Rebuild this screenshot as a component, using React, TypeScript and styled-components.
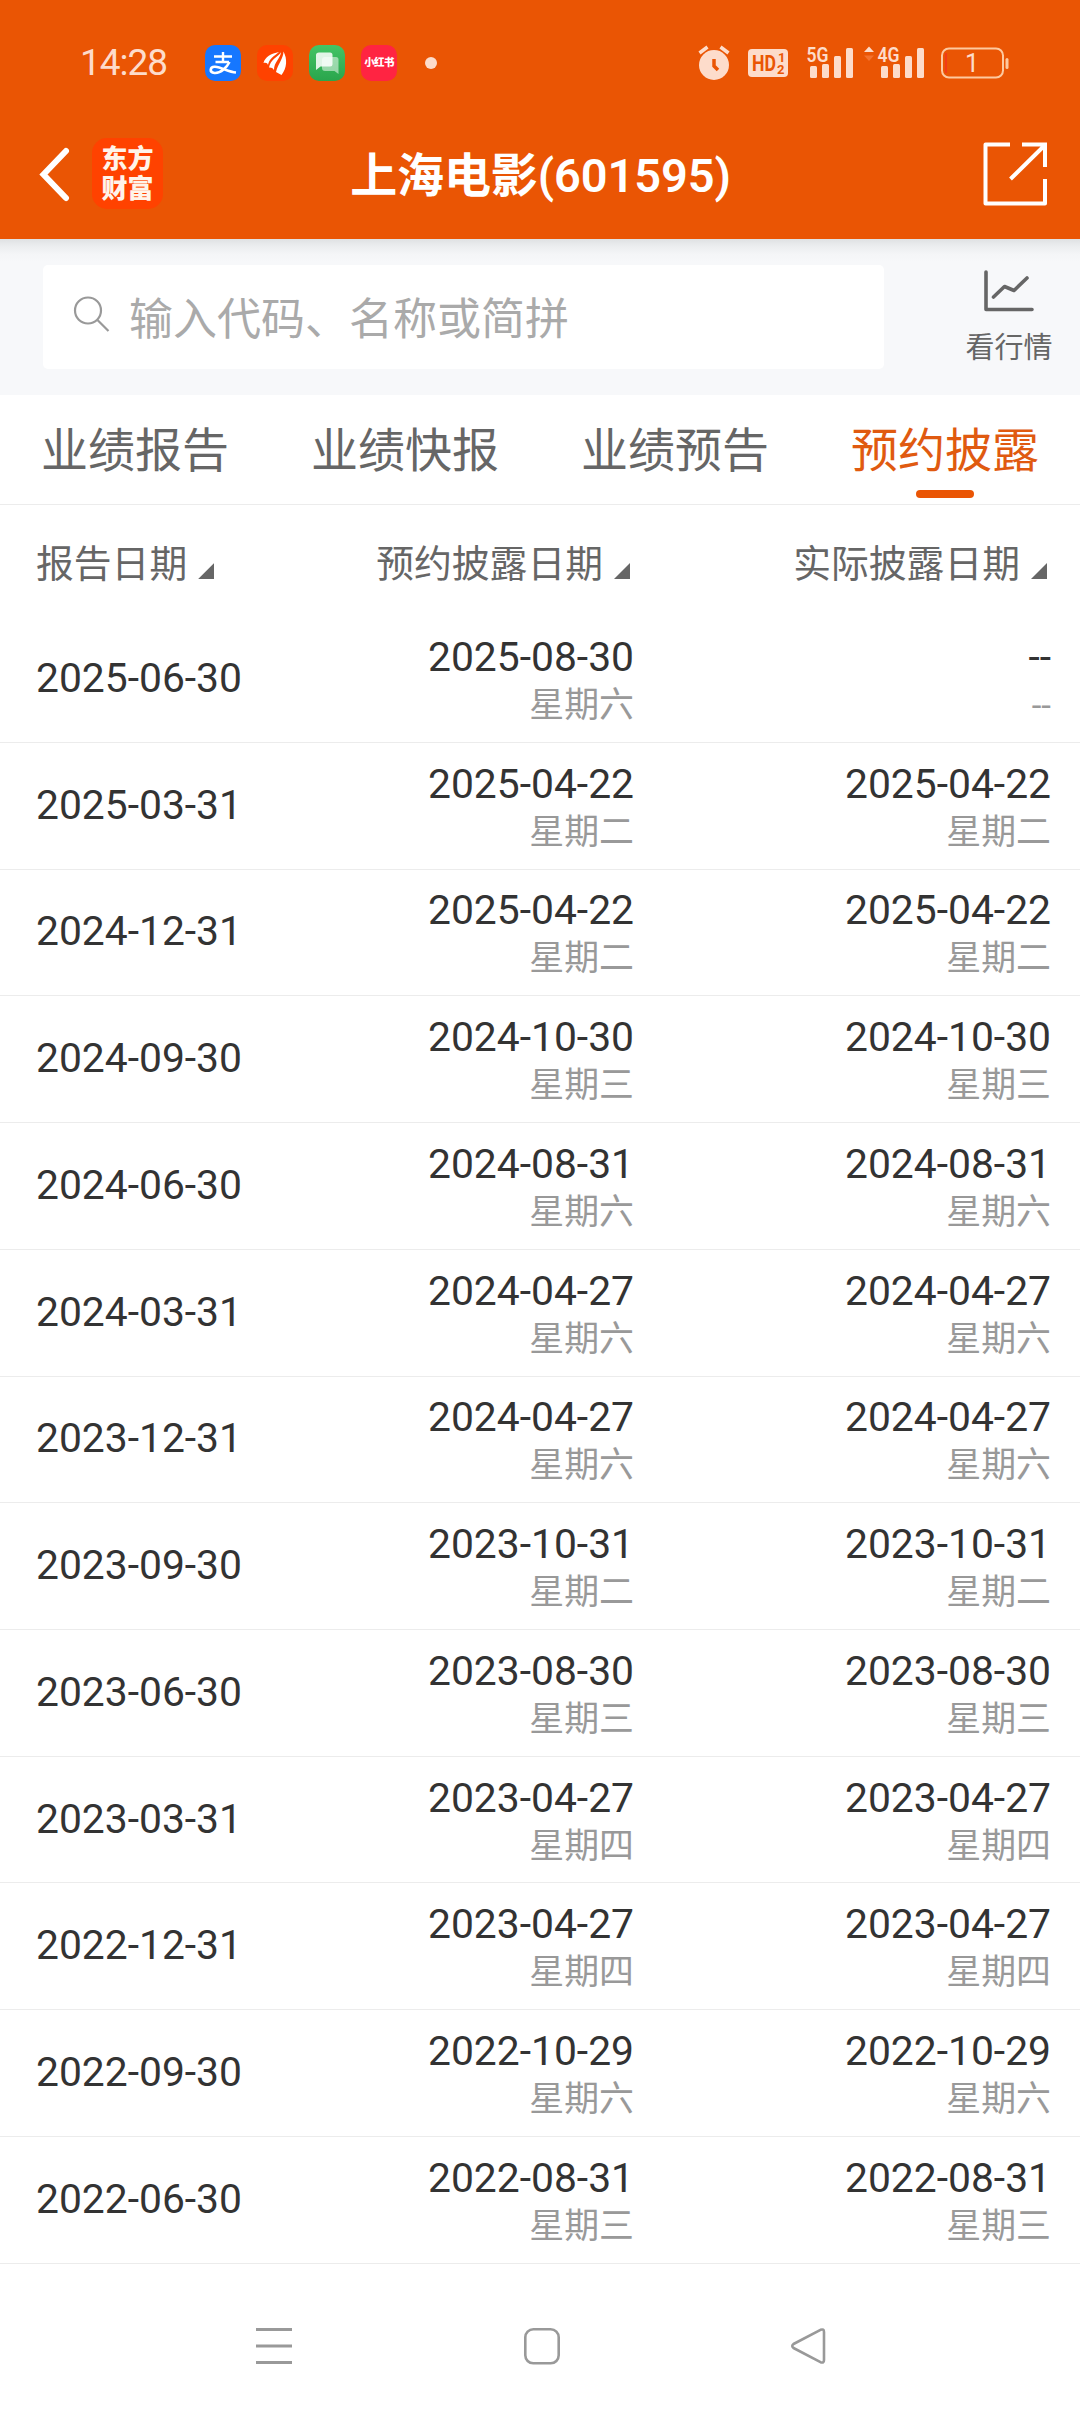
import React from 'react';
import styled, { createGlobalStyle } from 'styled-components';

const PALE = '#fddccb';

const GlobalStyle = createGlobalStyle`
  * { box-sizing: border-box; }
  body {
    margin: 0;
    background: #fff;
    font-family: Roboto, "Noto Sans CJK SC", sans-serif;
    color: #333;
  }
`;

const Screen = styled.div`
  width: 1080px;
  height: 2412px;
  display: flex;
  flex-direction: column;
  overflow: hidden;
  background: #fff;
`;

const Header = styled.header`
  flex: none;
  height: 239px;
  background: #ea5504;
`;

const StatusBar = styled.div`
  height: 110px;
  padding: 15px 71px 0 80px;
  display: flex;
  align-items: center;
  justify-content: space-between;
`;

const StatusGroup = styled.div`
  display: flex;
  align-items: center;
`;

const Clock = styled.span`
  width: 125px;
  font-size: 37px;
  line-height: 40px;
  letter-spacing: -1px;
  color: ${PALE};
`;

const AppIcons = styled.div`
  display: flex;
  gap: 16px;
  margin-right: 28px;
`;

const AppIcon = styled.span<{ $bg: string }>`
  width: 36px;
  height: 36px;
  border-radius: 10px;
  display: flex;
  align-items: center;
  justify-content: center;
  background: ${(p) => p.$bg};
  color: #fff;
  font-weight: 900;
  font-size: 10.5px;
  line-height: 36px;
  letter-spacing: -0.6px;
  white-space: nowrap;
`;

const MoreDot = styled.span`
  width: 12px;
  height: 12px;
  border-radius: 50%;
  background: ${PALE};
`;

const NavBar = styled.div`
  height: 129px;
  padding: 0 33px 2px 38px;
  display: grid;
  grid-template-columns: 200px 1fr 200px;
  align-items: center;
`;

const NavLeft = styled.div`
  display: flex;
  align-items: center;
  gap: 20px;
`;

const NavRight = styled.div`
  display: flex;
  justify-content: flex-end;
`;

const Brand = styled.div`
  width: 71px;
  height: 71px;
  padding-top: 2px;
  border-radius: 15px;
  background: #ff4200;
  display: flex;
  flex-direction: column;
  align-items: center;
  justify-content: center;
  font-size: 26px;
  line-height: 29.5px;
  font-weight: 900;
  color: #fff4ea;
`;

const Title = styled.h1`
  margin: 0 0 0 -4px;
  padding: 5px 0 0;
  text-align: center;
  font-size: 47px;
  line-height: 60px;
  font-weight: 600;
  letter-spacing: -0.1px;
  color: #fff;
  white-space: nowrap;
`;

const SearchPanel = styled.section`
  flex: none;
  height: 156px;
  padding: 26px 0 27px 43px;
  display: flex;
  background: linear-gradient(#dfe1e3 0, #ebedef 7px, #f4f5f7 15px, #f7f8fa 23px);
`;

const SearchBox = styled.div`
  width: 841px;
  height: 104px;
  padding: 0 30px;
  display: flex;
  align-items: center;
  gap: 19px;
  border-radius: 5px;
  background: #fff;
`;

const Placeholder = styled.span`
  padding-top: 5px;
  font-size: 44px;
  line-height: 60px;
  color: #aaa;
`;

const QuoteLink = styled.div`
  flex: 1;
  padding: 5px 0 0 54px;
  display: flex;
  flex-direction: column;
  align-items: center;
  gap: 17px;
  font-size: 29px;
  line-height: 38px;
  color: #666;
`;

const TabBar = styled.nav`
  flex: none;
  height: 110px;
  display: grid;
  grid-template-columns: repeat(4, 270px);
  border-bottom: 1px solid #ececec;
`;

const Tab = styled.div<{ $active?: boolean }>`
  padding-top: 26px;
  display: flex;
  flex-direction: column;
  align-items: center;
  gap: 9px;
  font-size: 47px;
  line-height: 60px;
  color: ${(p) => (p.$active ? '#e05a10' : '#666')};
`;

const TabMark = styled.span`
  width: 58px;
  height: 8px;
  border-radius: 4px;
  background: #ea5504;
`;

const TableHead = styled.div`
  flex: none;
  height: 111.3px;
  display: grid;
  grid-template-columns: 217px 381px 417px;
  padding-left: 36px;
`;

const HeadCell = styled.div<{ $end?: boolean }>`
  display: flex;
  align-items: flex-start;
  justify-content: ${(p) => (p.$end ? 'flex-end' : 'flex-start')};
  gap: 11px;
  padding: 34px ${(p) => (p.$end ? 4 : 0)}px 0 0;
  font-size: 37.8px;
  line-height: 50px;
  color: #666;
  white-space: nowrap;
`;

const SortMark = styled.span`
  margin-top: 24px;
  width: 16px;
  height: 16px;
  background: #666;
  clip-path: polygon(100% 0, 100% 100%, 0 100%);
`;

const Row = styled.div`
  flex: none;
  height: 126.72px;
  display: grid;
  grid-template-columns: 217px 381px 417px;
  padding-left: 36px;
  border-bottom: 1px solid #ececec;
`;

const ReportDate = styled.div`
  padding-top: 36.75px;
  font-size: 40.8px;
  line-height: 50px;
  white-space: nowrap;
`;

const DateCell = styled.div`
  padding-top: 16.75px;
  display: flex;
  flex-direction: column;
  align-items: flex-end;
`;

const DateText = styled.span`
  font-size: 40.8px;
  line-height: 48px;
`;

const Weekday = styled.span`
  margin-top: 1px;
  font-size: 34.9px;
  line-height: 48px;
  color: #999;
`;

const SystemNav = styled.footer`
  flex: 1;
  padding: 61.5px 252px 0 254px;
  display: flex;
  justify-content: space-between;
  align-items: flex-start;
`;

const StatusIcons = styled.div`
  display: grid;
  grid-template-columns: 50px 58px 58px 77px 68px;
  align-items: center;
`;

const SignalSlot = styled.div`
  display: flex;
  justify-content: flex-start;
`;

const tabs = ['业绩报告', '业绩快报', '业绩预告', '预约披露'];

const rows: [string, string, string, string, string][] = [
  ['2025-06-30', '2025-08-30', '星期六', '--', '--'],
  ['2025-03-31', '2025-04-22', '星期二', '2025-04-22', '星期二'],
  ['2024-12-31', '2025-04-22', '星期二', '2025-04-22', '星期二'],
  ['2024-09-30', '2024-10-30', '星期三', '2024-10-30', '星期三'],
  ['2024-06-30', '2024-08-31', '星期六', '2024-08-31', '星期六'],
  ['2024-03-31', '2024-04-27', '星期六', '2024-04-27', '星期六'],
  ['2023-12-31', '2024-04-27', '星期六', '2024-04-27', '星期六'],
  ['2023-09-30', '2023-10-31', '星期二', '2023-10-31', '星期二'],
  ['2023-06-30', '2023-08-30', '星期三', '2023-08-30', '星期三'],
  ['2023-03-31', '2023-04-27', '星期四', '2023-04-27', '星期四'],
  ['2022-12-31', '2023-04-27', '星期四', '2023-04-27', '星期四'],
  ['2022-09-30', '2022-10-29', '星期六', '2022-10-29', '星期六'],
  ['2022-06-30', '2022-08-31', '星期三', '2022-08-31', '星期三'],
];

const AlipayIcon = () => (
  <svg width="36" height="36" viewBox="0 0 36 36" fill="none" stroke="#fff">
    <path d="M9 11.5H27M18 7V17M10.5 17H24" strokeWidth="2.4" />
    <path d="M24.5 17C22 22 16 28.5 9.5 28C4 27.3 4.8 21.5 10 21.8C17 22.2 23 27 31 27.5" strokeWidth="2.6" />
  </svg>
);

const WingIcon = () => (
  <svg width="36" height="36" viewBox="0 0 36 36" fill="#fff">
    <path d="M22 7C14 8.5 8 12 6.5 18C9 17.3 10.5 18 11 20C12 14 17 11 22 7Z" />
    <path d="M24 7.2C21 12 13.5 14 12 22.5C14 22.3 16 23 17 25C17 17 23 14 24 7.2Z" />
    <path d="M26.5 6.5C26.5 13 21 19 19 27L24.5 30C30 23 30.5 14 26.5 6.5Z" />
  </svg>
);

const ChatIcon = () => (
  <svg width="36" height="36" viewBox="0 0 36 36">
    <path d="M16 12H27Q29.5 12 29.5 14.5V29L25.5 26H16Q13 26 13 23V15Q13 12 16 12Z" fill="#fff" opacity=".5" />
    <path d="M10 7.5H21Q23.5 7.5 23.5 10V19Q23.5 21.5 21 21.5H11.5L7 25V10Q7 7.5 10 7.5Z" fill="#fff" opacity=".85" />
  </svg>
);

const SignalBars = ({ label, arrows }: { label: string; arrows?: boolean }) => (
  <svg width={arrows ? 61 : 48} height="42" viewBox={arrows ? '-13 -4 61 42' : '0 -4 48 42'} fill={PALE}>
    <text x="0.5" y="15.5" fontFamily="Roboto, sans-serif" fontSize="21" fontWeight="600" textLength="22" lengthAdjust="spacingAndGlyphs">{label}</text>
    <rect x="4" y="20" width="7" height="12" rx="1.5" />
    <rect x="16" y="18" width="7" height="14" rx="1.5" />
    <rect x="28" y="10" width="7" height="22" rx="1.5" />
    <rect x="40" y="2" width="7" height="30" rx="1.5" />
    {arrows && <path d="M-13 6L-8 0.5L-3 6Z" />}
    {arrows && <path d="M-13 9.5L-8 15L-3 9.5Z" fill="#f4722e" />}
  </svg>
);

export default function App() {
  return (
    <Screen>
      <GlobalStyle />
      <Header>
        <StatusBar>
          <StatusGroup>
            <Clock>14:28</Clock>
            <AppIcons>
              <AppIcon $bg="#1677ff"><AlipayIcon /></AppIcon>
              <AppIcon $bg="#ff4200"><WingIcon /></AppIcon>
              <AppIcon $bg="linear-gradient(#43c465, #2aa54c)"><ChatIcon /></AppIcon>
              <AppIcon $bg="#ff2442">小红书</AppIcon>
            </AppIcons>
            <MoreDot />
          </StatusGroup>
          <StatusIcons>
            <svg width="34" height="36" viewBox="0 0 34 36">
              <circle cx="16" cy="20" r="15" fill={PALE} />
              <path d="M1.5 8L9.5 2M30.5 8L22.5 2" stroke={PALE} strokeWidth="3.5" />
              <path d="M16 14V21L20 25" fill="none" stroke="#ea5504" strokeWidth="3.5" />
            </svg>
            <svg width="40" height="28" viewBox="0 0 40 28">
              <rect width="40" height="28" rx="4" fill={PALE} />
              <g fill="#ea5504" fontFamily="Roboto, sans-serif" fontWeight="700">
                <text x="4" y="22" fontSize="22" textLength="24" lengthAdjust="spacingAndGlyphs">HD</text>
                <text x="30" y="12.5" fontSize="13">1</text>
                <text x="29" y="25" fontSize="13">2</text>
              </g>
            </svg>
            <SignalSlot><SignalBars label="5G" /></SignalSlot>
            <SignalSlot><SignalBars label="4G" arrows /></SignalSlot>
            <svg width="68" height="32" viewBox="0 0 68 32">
              <rect x="1" y="1.5" width="61" height="29" rx="7" fill="none" stroke="#fdc9a0" strokeWidth="2" />
              <path d="M5 6V26" stroke="#f5321e" strokeWidth="1.5" />
              <rect x="64.5" y="11" width="3" height="11" rx="1.5" fill="#fdc9a0" />
              <text x="31" y="25" textAnchor="middle" fontFamily="Roboto, sans-serif" fontSize="25" fill={PALE}>1</text>
            </svg>
          </StatusIcons>
        </StatusBar>
        <NavBar>
          <NavLeft>
            <svg width="34" height="56" viewBox="0 0 34 56" fill="none" stroke="#fff" strokeWidth="6" strokeLinecap="round">
              <path d="M28 5L5.5 28.5L28 52" />
            </svg>
            <Brand>
              <span>东方</span>
              <span>财富</span>
            </Brand>
          </NavLeft>
          <Title>上海电影(601595)</Title>
          <NavRight>
            <svg width="64" height="64" viewBox="0 0 64 64" fill="none" stroke="#fff" strokeWidth="4" strokeLinejoin="round">
              <path d="M27 2.5H2.5V61.5H62V37" />
              <path d="M39 2.5H62V25M61 4L27.5 37" strokeLinejoin="miter" />
            </svg>
          </NavRight>
        </NavBar>
      </Header>

      <SearchPanel>
        <SearchBox>
          <svg width="37" height="46" viewBox="0 0 37 46" fill="none" stroke="#999" strokeWidth="2.2">
            <circle cx="15" cy="16.5" r="13" />
            <path d="M24.5 26L35.5 37" />
          </svg>
          <Placeholder>输入代码、名称或简拼</Placeholder>
        </SearchBox>
        <QuoteLink>
          <svg width="50" height="42" viewBox="0 0 50 42" fill="none" stroke="#666" strokeWidth="3.6" strokeLinecap="round" strokeLinejoin="round">
            <path d="M2 2V39.5H48" />
            <path d="M9.5 27L20.5 16.5L30 20.5L43 8" />
          </svg>
          <span>看行情</span>
        </QuoteLink>
      </SearchPanel>

      <TabBar>
        {tabs.map((label, i) => (
          <Tab key={label} $active={i === 3}>
            <span>{label}</span>
            {i === 3 && <TabMark />}
          </Tab>
        ))}
      </TabBar>

      <TableHead>
        <HeadCell>报告日期<SortMark /></HeadCell>
        <HeadCell $end>预约披露日期<SortMark /></HeadCell>
        <HeadCell $end>实际披露日期<SortMark /></HeadCell>
      </TableHead>

      {rows.map(([report, planned, plannedDay, actual, actualDay]) => (
        <Row key={report}>
          <ReportDate>{report}</ReportDate>
          <DateCell>
            <DateText>{planned}</DateText>
            <Weekday>{plannedDay}</Weekday>
          </DateCell>
          <DateCell>
            <DateText>{actual}</DateText>
            <Weekday>{actualDay}</Weekday>
          </DateCell>
        </Row>
      ))}

      <SystemNav>
        <svg width="40" height="42" viewBox="0 0 40 42" stroke="#999" strokeWidth="3">
          <path d="M2 4.5H38M2 21H38M2 37.5H38" />
        </svg>
        <svg width="40" height="42" viewBox="0 0 40 42" fill="none" stroke="#999" strokeWidth="2.6">
          <rect x="4.3" y="4.3" width="33.4" height="34" rx="8" />
        </svg>
        <svg width="40" height="42" viewBox="0 0 40 42" fill="none" stroke="#999" strokeWidth="2.6" strokeLinejoin="round">
          <path d="M32.5 4.8L5.5 19Q3 21 5.5 23L32.5 37.2Q36 38.5 36 35V7Q36 3.5 32.5 4.8Z" />
        </svg>
      </SystemNav>
    </Screen>
  );
}
